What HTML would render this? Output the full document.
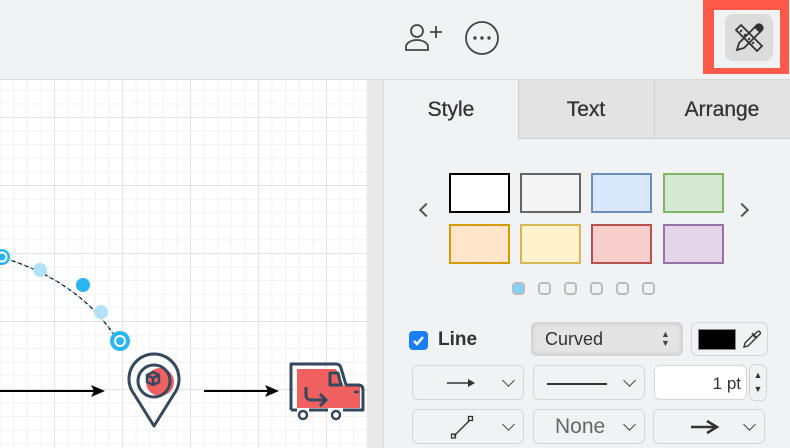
<!DOCTYPE html>
<html><head><meta charset="utf-8"><style>
*{box-sizing:border-box;margin:0;padding:0}
body{width:790px;height:448px;overflow:hidden;background:#f1f2f4;font-family:"Liberation Sans",Arial,sans-serif;position:relative}
.a{position:absolute}
.canvas{left:0;top:80px;width:367px;height:368px;background-color:#fff;
background-image:linear-gradient(to right,#e3e3e3 1px,transparent 1px),linear-gradient(to bottom,#e3e3e3 1px,transparent 1px),linear-gradient(to right,#f2f2f2 1px,transparent 1px),linear-gradient(to bottom,#f2f2f2 1px,transparent 1px);
background-size:68px 68px,68px 68px,13.6px 13.6px,13.6px 13.6px;background-position:54px 37px,54px 37px,54px 37px,54px 37px}
.tab{top:80px;height:59px;font-size:21px;color:#333;display:flex;align-items:center;justify-content:center;-webkit-text-stroke:0.3px #333}
.sw{width:61px;height:40px;border:2px solid}
.dot{top:282px;width:13px;height:13px;border:2px solid #bbb;border-radius:4px}
.box{border:1px solid #d6d6d6;border-radius:6px;height:35px}
.chev{position:absolute;right:10px;top:10px;width:9px;height:9px;border-right:1.5px solid #444;border-bottom:1.5px solid #444;transform:rotate(45deg)}
</style></head><body>
<div class="a" style="left:0;top:79px;width:790px;height:1px;background:#dadada"></div>
<div class="a canvas"></div>
<div class="a" style="left:367px;top:80px;width:16px;height:368px;background:#e9e9e9"></div>
<div class="a" style="left:383px;top:80px;width:1px;height:368px;background:#dadada"></div>

<svg class="a" style="left:402px;top:20px" width="44" height="36" viewBox="0 0 44 36" fill="none" stroke="#444" stroke-width="1.8"><circle cx="15" cy="11" r="6"/><path d="M4 30v-3c0-4 5-7 11-7s11 3 11 7v3z"/><path d="M34 6v12M28 12h12"/></svg>
<svg class="a" style="left:464px;top:20px" width="36" height="36" viewBox="0 0 36 36"><circle cx="18" cy="18" r="16" fill="none" stroke="#444" stroke-width="1.8"/><circle cx="11" cy="18" r="1.7" fill="#444"/><circle cx="18" cy="18" r="1.7" fill="#444"/><circle cx="25" cy="18" r="1.7" fill="#444"/></svg>
<div class="a" style="left:703px;top:0;width:86px;height:74px;background:#fe5a4a"></div>
<div class="a" style="left:714px;top:10px;width:66px;height:58px;background:#f1f2f4"></div>
<div class="a" style="left:725px;top:14px;width:48px;height:47px;background:#dcdcdc;border-radius:8px"></div>
<svg class="a" style="left:733px;top:22px" width="32" height="32" viewBox="0 0 32 32" fill="none" stroke="#333" stroke-width="1.8"><path d="M3 8l5-5 21 21-5 5z M7 10l2-2 M11 14l2-2 M15 18l2-2 M19 22l2-2"/><path d="M4 28l2-7 17-17 5 5-17 17z M4 28l2-7"/><path d="M22 5l5 5 2-2c1-1 1-3 0-4l-1-1c-1-1-3-1-4 0z" fill="#333"/></svg>

<div class="a" style="left:518px;top:80px;width:272px;height:59px;background:#e3e3e3;border-bottom:1px solid #d0d0d0"></div>
<div class="a" style="left:518px;top:80px;width:1px;height:59px;background:#d0d0d0"></div>
<div class="a" style="left:654px;top:80px;width:1px;height:59px;background:#d0d0d0"></div>
<div class="a tab" style="left:384px;width:134px">Style</div>
<div class="a tab" style="left:518px;width:136px">Text</div>
<div class="a tab" style="left:654px;width:136px">Arrange</div>

<div class="a" style="left:421px;top:205px;width:10px;height:10px;border-left:2.5px solid #555;border-bottom:2.5px solid #555;transform:rotate(45deg)"></div>
<div class="a" style="left:737px;top:205px;width:10px;height:10px;border-right:2.5px solid #555;border-top:2.5px solid #555;transform:rotate(45deg)"></div>
<div class="a sw" style="left:449px;top:173px;background:#fff;border-color:#000"></div>
<div class="a sw" style="left:520px;top:173px;background:#f5f5f5;border-color:#666"></div>
<div class="a sw" style="left:591px;top:173px;background:#dae8fc;border-color:#6c8ebf"></div>
<div class="a sw" style="left:663px;top:173px;background:#d5e8d4;border-color:#82b366"></div>
<div class="a sw" style="left:449px;top:224px;background:#ffe6cc;border-color:#d79b00"></div>
<div class="a sw" style="left:520px;top:224px;background:#fff2cc;border-color:#d6b656"></div>
<div class="a sw" style="left:591px;top:224px;background:#f8cecc;border-color:#b85450"></div>
<div class="a sw" style="left:663px;top:224px;background:#e1d5e7;border-color:#9673a6"></div>
<div class="a dot" style="left:512px;background:#7fd4fc"></div>
<div class="a dot" style="left:538px"></div><div class="a dot" style="left:564px"></div>
<div class="a dot" style="left:590px"></div><div class="a dot" style="left:616px"></div><div class="a dot" style="left:642px"></div>

<div class="a" style="left:409px;top:331px;width:19px;height:19px;background:#1a7ff5;border-radius:4px"></div>
<svg class="a" style="left:409px;top:331px" width="19" height="19"><path d="M5 10l3 3 6-7" stroke="#fff" stroke-width="2.4" fill="none"/></svg>
<div class="a" style="left:438px;top:329px;font-size:19px;font-weight:bold;color:#333">Line</div>
<div class="a box" style="left:531px;top:322px;width:152px;height:34px;background:#e4e4e4;box-shadow:inset 0 0 4px #bbb"></div>
<div class="a" style="left:545px;top:329px;font-size:18px;color:#333">Curved</div>
<div class="a" style="left:661px;top:330px;font-size:9px;line-height:9px;color:#444">▲<br>▼</div>
<div class="a box" style="left:691px;top:322px;width:77px;height:34px"></div>
<div class="a" style="left:698px;top:329px;width:38px;height:21px;background:#000;border:1px solid #888"></div>
<svg class="a" style="left:741px;top:328px" width="20" height="22" fill="none" stroke="#333" stroke-width="1.4"><path d="M3 19l1-4 8-8 3 3-8 8z M11 5l5 5 M13 7l3-3c1-1 2-1 3 0s0 2 0 2l-3 3"/></svg>

<div class="a box" style="left:412px;top:365px;width:112px"><svg class="a" style="left:34px;top:11px" width="30" height="12"><path d="M0 6h22" stroke="#333" stroke-width="1.5"/><path d="M21 2l7 4-7 4z" fill="#333"/></svg><div class="chev"></div></div>
<div class="a box" style="left:533px;top:365px;width:112px"><div class="a" style="left:13px;top:17px;width:60px;height:1.5px;background:#333"></div><div class="chev"></div></div>
<div class="a box" style="left:654px;top:365px;width:93px;background:#fff;font-size:17px;color:#333;text-align:right;padding:8px 5px 0 0">1 pt</div>
<div class="a box" style="left:749px;top:364px;width:18px;height:37px;font-size:9px;line-height:14px;text-align:center;color:#333;padding-top:3px">▲<br>▼</div>

<div class="a box" style="left:412px;top:409px;width:112px"><svg class="a" style="left:37px;top:4px" width="26" height="26" fill="none" stroke="#333" stroke-width="1.3"><path d="M4 22L20 6"/><rect x="1.5" y="20" width="4" height="4"/><rect x="18.5" y="2.5" width="4" height="4"/></svg><div class="chev"></div></div>
<div class="a box" style="left:533px;top:409px;width:112px"><div class="a" style="left:21px;top:5px;font-size:21px;color:#666">None</div><div class="chev"></div></div>
<div class="a box" style="left:653px;top:409px;width:112px"><svg class="a" style="left:36px;top:9px" width="32" height="16"><path d="M1 8h24" stroke="#333" stroke-width="2.5"/><path d="M17 2l10 6-10 6" stroke="#333" stroke-width="2.5" fill="none"/></svg><div class="chev"></div></div>

<svg class="a" style="left:0;top:0" width="367" height="448">
<path d="M4 258 Q80 282 116 338" fill="none" stroke="#000" stroke-width="1.2" stroke-dasharray="5 2"/>
<path d="M4 258 Q80 282 116 338" fill="none" stroke="#29b6f2" stroke-width="1" stroke-dasharray="2 5"/>
<circle cx="40" cy="270" r="7" fill="#b3e1f8"/>
<circle cx="83" cy="285" r="7" fill="#29b6f2"/>
<circle cx="101" cy="312" r="7" fill="#b3e1f8"/>
<circle cx="2" cy="257" r="8" fill="#29b6f2"/><circle cx="2" cy="257" r="4.5" fill="none" stroke="#fff" stroke-width="2"/>
<circle cx="120" cy="341" r="10" fill="#29b6f2"/><circle cx="120" cy="341" r="5" fill="none" stroke="#fff" stroke-width="2"/>
<path d="M0 391h95" stroke="#000" stroke-width="2"/><path d="M91 385l14 6-14 6 3-6z" fill="#000"/>
<path d="M204 391h70" stroke="#000" stroke-width="2"/><path d="M265 385l14 6-14 6 3-6z" fill="#000"/>
<circle cx="160" cy="382" r="14" fill="#f06060"/>
<path d="M154 426 L134 394 A25 25 0 1 1 174 394 Z" fill="none" stroke="#34495e" stroke-width="3" stroke-linejoin="round"/>
<circle cx="154" cy="381" r="16" fill="none" stroke="#34495e" stroke-width="3"/>
<path d="M147 375l6-3 6 3v7l-6 3-6-3z M147 375l6 3 6-3 M153 378v7" fill="none" stroke="#34495e" stroke-width="2.5" stroke-linejoin="round"/>
<path d="M297 369 H336 L344 386 H360 V408 H297 Z" fill="#f06060"/>
<path d="M291 410 V364 H336 Q340 364 341 368 L346 385 H358 Q363 385 363 390 V410 H343 M328 410 H309 M297 410 H291" fill="none" stroke="#34495e" stroke-width="3" stroke-linejoin="round"/>
<path d="M330 373h8l3 12h-11z" fill="none" stroke="#34495e" stroke-width="3" stroke-linejoin="round"/>
<path d="M306 387v8c0 3 2 5 5 5h15 M320 394l6 6-6 6" fill="none" stroke="#34495e" stroke-width="3"/>
<path d="M354 392h5" stroke="#34495e" stroke-width="2.5"/>
<circle cx="303" cy="415" r="4" fill="#fff" stroke="#34495e" stroke-width="2.5"/>
<circle cx="336" cy="415" r="4" fill="#fff" stroke="#34495e" stroke-width="2.5"/>
</svg>
</body></html>
